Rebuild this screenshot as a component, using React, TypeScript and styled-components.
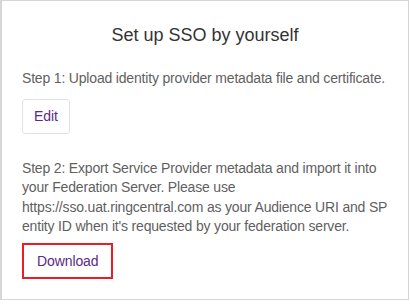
import React from "react";
import styled, { createGlobalStyle } from "styled-components";

const Global = createGlobalStyle`
  html, body { margin: 0; padding: 0; background: #ffffff; }
  body { font-family: "Liberation Sans", Arial, Helvetica, sans-serif; }
`;

const Card = styled.section`
  box-sizing: border-box;
  width: 409px;
  height: 300px;
  border: 1px solid #d6d6d6;
  border-left-width: 2px;
  border-top-width: 1px;
  background: #fff;
  padding: 0 18px 0 20px;
  display: flex;
  flex-direction: column;
  align-items: flex-start;
`;

const Title = styled.h2`
  align-self: stretch;
  margin: 22px 0 0;
  font-size: 18px;
  line-height: 24px;
  font-weight: 400;
  color: #333;
  text-align: center;
  padding-right: 2px;
`;

const Step = styled.p<{ $gap: number }>`
  margin: ${(p) => p.$gap}px 0 0;
  font-size: 14px;
  letter-spacing: -0.18px;
  line-height: 19.5px;
  color: #5f5f5f;
`;

const Button = styled.button<{ $highlight?: boolean; $gap: number }>`
  box-sizing: border-box;
  margin-top: ${(p) => p.$gap}px;
  padding: 0 ${(p) => (p.$highlight ? 13 : 11)}px;
  height: ${(p) => (p.$highlight ? 36 : 35)}px;
  min-width: 47px;
  background: #fff;
  border: ${(p) => (p.$highlight ? "2px solid #ec1c24" : "1px solid #e2e2e2")};
  border-radius: ${(p) => (p.$highlight ? 0 : 3)}px;
  font-family: "Liberation Sans", Arial, sans-serif;
  font-size: 14px;
  letter-spacing: -0.1px;
  color: #5a2b84;
  cursor: pointer;
`;

export default function App() {
  return (
    <>
      <Global />
      <Card>
        <Title>Set up SSO by yourself</Title>
        <Step $gap={22}>Step 1: Upload identity provider metadata file and certificate.</Step>
        <Button $gap={10}>Edit</Button>
        <Step $gap={25}>
          Step 2: Export Service Provider metadata and import it into your Federation
          Server. Please use https://sso.uat.ringcentral.com as your Audience URI and SP
          entity ID when it's requested by your federation server.
        </Step>
        <Button $gap={6} $highlight>
          Download
        </Button>
      </Card>
    </>
  );
}
